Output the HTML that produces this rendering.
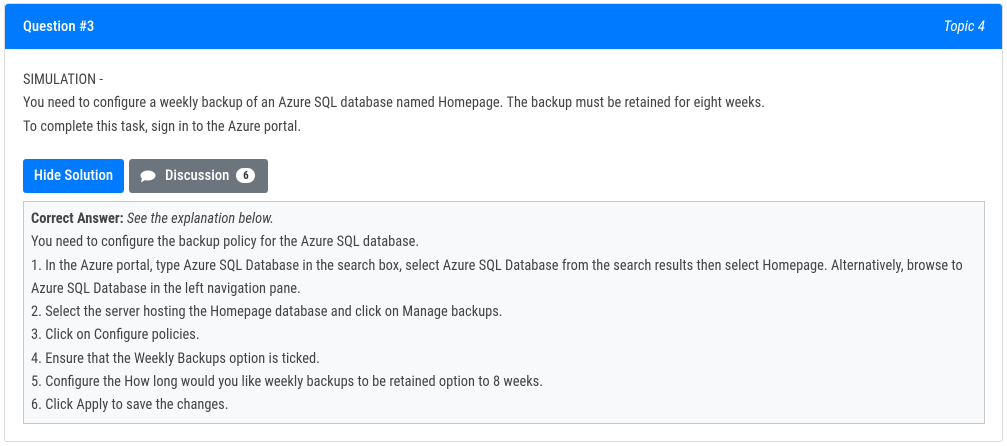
<!DOCTYPE html>
<html><head><style>
*{box-sizing:border-box;margin:0;padding:0}
body{width:1007px;height:446px;background:#fff;font-family:"Liberation Sans Narrow","Roboto Condensed","Liberation Sans",sans-serif;font-size:14.4px;color:#333;position:relative;overflow:hidden}
.card{position:absolute;left:4px;top:3px;width:999px;height:439px;border:1px solid #dcdcdc;border-radius:3px}
.hd{position:absolute;left:0;top:0;right:0;height:45px;background:#007bff;color:#fff;border-radius:3px 3px 0 0}
.hd .l{position:absolute;left:18px;top:13px;font-size:14.8px;font-weight:500}
.hd .r{position:absolute;right:17px;top:13px;font-style:italic;font-size:14.8px}
.q{position:absolute;left:18px;top:64px;line-height:23.3px;color:#444}
.btn{position:absolute;top:155px;height:34px;border-radius:3px;color:#fff;font-size:14.8px;line-height:33px;font-weight:500}
.b1{left:18px;width:101px;background:#007bff;text-align:center}
.b2{left:124px;width:139px;background:#6c757d;padding-left:36px}
.badge{display:inline-block;background:#fff;color:#333;border-radius:9px;width:19px;height:15px;line-height:15px;text-align:center;font-size:11px;font-weight:bold;margin-left:7px;vertical-align:1px}
.ans{position:absolute;left:18px;top:197px;width:962px;height:223px;background:#f8f9fa;border:1px solid #c8c8c8;padding:5px 7px;line-height:23.3px;color:#444}
</style></head><body>
<div class="card">
<div class="hd"><span class="l">Question #3</span><span class="r">Topic 4</span></div>
<div class="q">SIMULATION -<br>You need to configure a weekly backup of an Azure SQL database named Homepage. The backup must be retained for eight weeks.<br>To complete this task, sign in to the Azure portal.</div>
<div class="btn b1">Hide Solution</div>
<div class="btn b2"><svg style="position:absolute;left:11px;top:11px" width="16" height="13" viewBox="0 0 16 13"><ellipse cx="8" cy="5.5" rx="7.5" ry="5" fill="#fff"/><path d="M2 8 L1 12.5 L6 9.5Z" fill="#fff"/></svg>Discussion<span class="badge">6</span></div>
<div class="ans"><b>Correct Answer:</b> <i>See the explanation below.</i><br>You need to configure the backup policy for the Azure SQL database.<br>1. In the Azure portal, type Azure SQL Database in the search box, select Azure SQL Database from the search results then select Homepage. Alternatively, browse to<br>Azure SQL Database in the left navigation pane.<br>2. Select the server hosting the Homepage database and click on Manage backups.<br>3. Click on Configure policies.<br>4. Ensure that the Weekly Backups option is ticked.<br>5. Configure the How long would you like weekly backups to be retained option to 8 weeks.<br>6. Click Apply to save the changes.</div>
</div>
</body></html>
